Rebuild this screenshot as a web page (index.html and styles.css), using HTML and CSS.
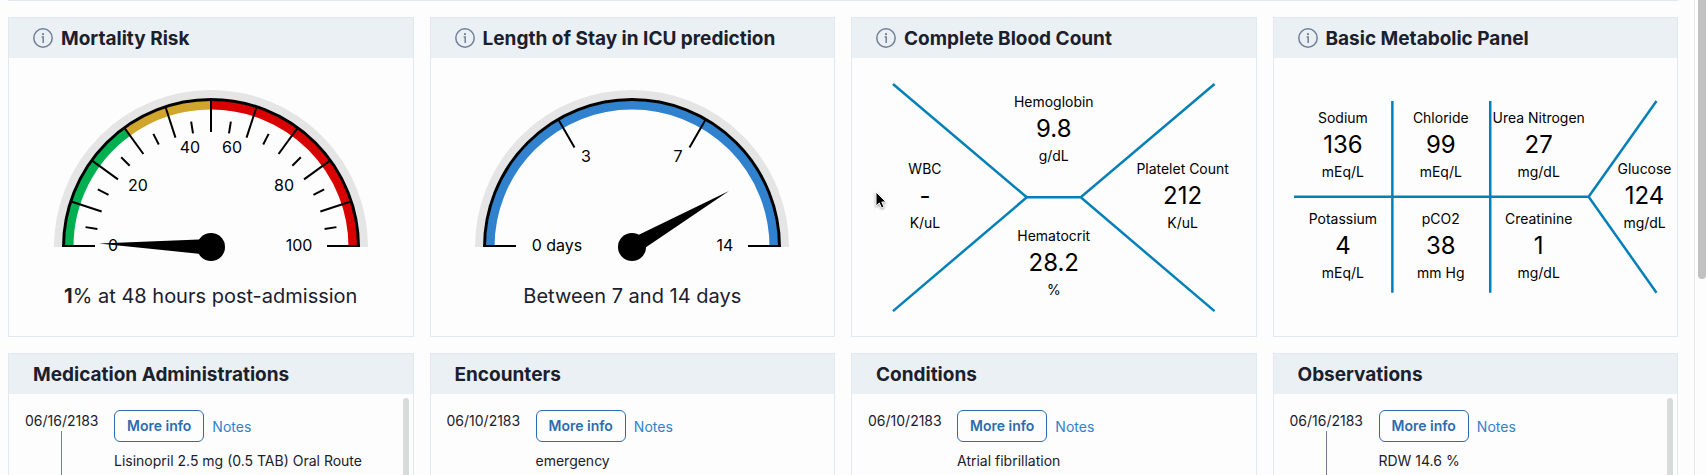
FILE: index.html
```
<!DOCTYPE html>
<html lang="en">
	<head>
		<meta charset="utf-8" />
		<title>Patient Dashboard</title>
		<link rel="stylesheet" href="styles.css">
	</head>
	<body>
		<svg class="defs" aria-hidden="true">
			<symbol id="info" viewBox="0 0 20 20">
				<circle cx="10" cy="10" r="9.2" fill="none" stroke="currentColor" stroke-width="1.5" />
				<circle cx="10" cy="6.2" r="1.1" fill="currentColor" />
				<path d="M8.6 9H10.2V15" fill="none" stroke="currentColor" stroke-width="1.5" />
			</symbol>
		</svg>
		<div class="app">
			<main>
				<div class="cards">
					<section class="card">
						<header>
							<button class="info" aria-label="About Mortality Risk"><svg><use href="#info" /></svg></button>
							<h2>Mortality Risk</h2>
						</header>
						<div class="gauge">
							<svg viewBox="-158 -158 316 174" width="316" height="174">
								<path class="rim" d="M-153 0A153 153 0 0 1 153 0" />
								<path class="band green" d="M-142 0A142 142 0 0 1 -83.5 -114.9" />
								<path class="band yellow" d="M-83.5 -114.9A142 142 0 0 1 0 -142" />
								<path class="band red" d="M0 -142A142 142 0 0 1 142 0" />
								<path class="ring" d="M-147.5 0A147.5 147.5 0 0 1 147.5 0" />
								<g class="ticks">
									<path d="M-149 -1h33" />
									<path d="M-147 0h32" transform="rotate(18)" />
									<path d="M-147 0h32" transform="rotate(36)" />
									<path d="M-147 0h32" transform="rotate(54)" />
									<path d="M-147 0h32" transform="rotate(72)" />
									<path d="M-147 0h32" transform="rotate(90)" />
									<path d="M-147 0h32" transform="rotate(108)" />
									<path d="M-147 0h32" transform="rotate(126)" />
									<path d="M-147 0h32" transform="rotate(144)" />
									<path d="M-147 0h32" transform="rotate(162)" />
									<path d="M149 -1h-33" />
									<path d="M-127 0h12" transform="rotate(9)" />
									<path d="M-127 0h12" transform="rotate(27)" />
									<path d="M-127 0h12" transform="rotate(45)" />
									<path d="M-127 0h12" transform="rotate(63)" />
									<path d="M-127 0h12" transform="rotate(81)" />
									<path d="M-127 0h12" transform="rotate(99)" />
									<path d="M-127 0h12" transform="rotate(117)" />
									<path d="M-127 0h12" transform="rotate(135)" />
									<path d="M-127 0h12" transform="rotate(153)" />
									<path d="M-127 0h12" transform="rotate(171)" />
								</g>
								<g class="scale">
									<text x="-98" y="4">0</text>
									<text x="-73" y="-56">20</text>
									<text x="-21" y="-94">40</text>
									<text x="21" y="-94">60</text>
									<text x="73" y="-56">80</text>
									<text x="88" y="4">100</text>
								</g>
								<path d="M-112 0L0 -8V8Z" transform="rotate(1.8)" />
								<circle r="14" />
							</svg>
							<p><b>1</b>% at 48 hours post-admission</p>
						</div>
					</section>
					<section class="card">
						<header>
							<button class="info" aria-label="About Length of Stay"><svg><use href="#info" /></svg></button>
							<h2>Length of Stay in ICU prediction</h2>
						</header>
						<div class="gauge">
							<svg viewBox="-158 -158 316 174" width="316" height="174">
								<path class="rim" d="M-153 0A153 153 0 0 1 153 0" />
								<path class="band blue" d="M-142 0A142 142 0 0 1 142 0" />
								<path class="ring" d="M-147.5 0A147.5 147.5 0 0 1 147.5 0" />
								<g class="ticks">
									<path d="M-149 -1h33" />
									<path d="M-147 0h32" transform="rotate(60)" />
									<path d="M-147 0h32" transform="rotate(120)" />
									<path d="M149 -1h-33" />
								</g>
								<g class="scale">
									<text x="-75" y="4">0 days</text>
									<text x="-46" y="-85">3</text>
									<text x="46" y="-85">7</text>
									<text x="93" y="4">14</text>
								</g>
								<path d="M-112 0L0 -8V8Z" transform="rotate(150)" />
								<circle r="14" />
							</svg>
							<p>Between 7 and 14 days</p>
						</div>
					</section>
					<section class="card">
						<header>
							<button class="info" aria-label="About Complete Blood Count"><svg><use href="#info" /></svg></button>
							<h2>Complete Blood Count</h2>
						</header>
						<svg class="fishbone" viewBox="0 -1 404 278">
							<path d="M41 25L175 138.5L41 252.5M363 25L229 138.5L363 252.5M175 138.5H229" />
							<g transform="translate(202 48)"><text>Hemoglobin</text><text class="value" y="30">9.8</text><text y="54">g/dL</text></g>
							<g transform="translate(73 115)"><text>WBC</text><text class="value" y="30">-</text><text y="54">K/uL</text></g>
							<g transform="translate(331 115)"><text>Platelet Count</text><text class="value" y="30">212</text><text y="54">K/uL</text></g>
							<g transform="translate(202 182)"><text>Hematocrit</text><text class="value" y="30">28.2</text><text y="54">%</text></g>
						</svg>
					</section>
					<section class="card">
						<header>
							<button class="info" aria-label="About Basic Metabolic Panel"><svg><use href="#info" /></svg></button>
							<h2>Basic Metabolic Panel</h2>
						</header>
						<svg class="fishbone" viewBox="0 -1 404 278">
							<path d="M20 138H315M118.5 42V234M216.5 42V234M383 42L315 138L383 234" />
							<g transform="translate(69 64)"><text>Sodium</text><text class="value" y="30">136</text><text y="54">mEq/L</text></g>
							<g transform="translate(167 64)"><text>Chloride</text><text class="value" y="30">99</text><text y="54">mEq/L</text></g>
							<g transform="translate(265 64)"><text>Urea Nitrogen</text><text class="value" y="30">27</text><text y="54">mg/dL</text></g>
							<g transform="translate(69 165)"><text>Potassium</text><text class="value" y="30">4</text><text y="54">mEq/L</text></g>
							<g transform="translate(167 165)"><text>pCO2</text><text class="value" y="30">38</text><text y="54">mm Hg</text></g>
							<g transform="translate(265 165)"><text>Creatinine</text><text class="value" y="30">1</text><text y="54">mg/dL</text></g>
							<g transform="translate(371 115)"><text>Glucose</text><text class="value" y="30">124</text><text y="54">mg/dL</text></g>
						</svg>
					</section>
					<section class="card list">
						<header><h2>Medication Administrations</h2></header>
						<div class="entries">
							<div class="entry">
								<div class="date linked"><time>06/16/2183</time></div>
								<div class="detail">
									<div class="actions"><button class="more">More info</button><a href="#notes">Notes</a></div>
									<p>Lisinopril 2.5 mg (0.5 TAB) Oral Route</p>
								</div>
							</div>
							<div class="thumb"></div>
						</div>
					</section>
					<section class="card list">
						<header><h2>Encounters</h2></header>
						<div class="entries">
							<div class="entry">
								<div class="date"><time>06/10/2183</time></div>
								<div class="detail">
									<div class="actions"><button class="more">More info</button><a href="#notes">Notes</a></div>
									<p>emergency</p>
								</div>
							</div>
						</div>
					</section>
					<section class="card list">
						<header><h2>Conditions</h2></header>
						<div class="entries">
							<div class="entry">
								<div class="date"><time>06/10/2183</time></div>
								<div class="detail">
									<div class="actions"><button class="more">More info</button><a href="#notes">Notes</a></div>
									<p>Atrial fibrillation</p>
								</div>
							</div>
						</div>
					</section>
					<section class="card list">
						<header><h2>Observations</h2></header>
						<div class="entries">
							<div class="entry">
								<div class="date linked"><time>06/16/2183</time></div>
								<div class="detail">
									<div class="actions"><button class="more">More info</button><a href="#notes">Notes</a></div>
									<p>RDW 14.6 %</p>
								</div>
							</div>
							<div class="thumb"></div>
						</div>
					</section>
				</div>
			</main>
			<div class="scrollbar"><div class="page-thumb"></div></div>
		</div>
		<svg class="cursor" viewBox="0 0 14 20" width="14" height="20" aria-hidden="true">
			<path d="M1 1V15L4.3 12L6.5 17L9 16L6.8 11H11Z" fill="#000" stroke="#fff" />
		</svg>
	</body>
</html>
```
FILE: styles.css
```
* {
	box-sizing: border-box;
}
body {
	margin: 0;
	background: #fdfdfd;
	color: #1a202c;
	font-family: Inter, 'Liberation Sans', sans-serif;
	font-size: 14px;
	line-height: 20px;
}
h2, p {
	margin: 0;
}
button {
	font: inherit;
	cursor: pointer;
}
.defs {
	display: none;
}
.app {
	display: flex;
	height: 100vh;
	overflow: hidden;
}
main {
	flex: 1;
	padding: 0 16px 0 8px;
}
.cards {
	display: grid;
	grid-template-columns: repeat(4, minmax(0, 1fr));
	gap: 16px;
	padding-top: 16px;
	border-top: 1px solid #e2e8f0;
}
.card {
	min-height: 320px;
	border: 1px solid #e2e8f0;
}
.card header {
	display: flex;
	align-items: center;
	gap: 8px;
	height: 40px;
	padding: 0 24px;
	background: #ebf0f5;
}
h2 {
	padding-top: 2px;
	font-size: 19px;
	font-weight: 700;
	line-height: 24px;
	white-space: nowrap;
}
.info {
	display: flex;
	padding: 0;
	border: 0;
	background: none;
	color: #718096;
}
.info svg {
	width: 20px;
	height: 20px;
}

/* gauges */
.gauge {
	display: flex;
	flex-direction: column;
	align-items: center;
	padding-top: 31px;
}
.gauge p {
	margin-top: 19px;
	font-size: 20px;
	line-height: 28px;
}
.rim, .band, .ring {
	fill: none;
}
.rim {
	stroke: #e5e5e5;
	stroke-width: 8;
}
.ring {
	stroke: #000;
	stroke-width: 3;
}
.band {
	stroke-width: 9;
}
.green {
	stroke: #00b050;
}
.yellow {
	stroke: #d0a52c;
}
.red {
	stroke: #d90000;
}
.blue {
	stroke: #3182ce;
}
.ticks {
	stroke: #000;
	stroke-width: 2;
}
.scale {
	font-size: 16px;
	text-anchor: middle;
}

/* lab fishbone diagrams */
.fishbone {
	display: block;
	width: 100%;
	font-size: 14px;
	text-anchor: middle;
}
.fishbone path {
	fill: none;
	stroke: #0480b8;
	stroke-width: 2.5;
}
.value {
	font-size: 24px;
}

/* timelines */
.entries {
	position: relative;
	padding: 16px;
}
.entry {
	display: flex;
	gap: 16px;
}
.date {
	display: flex;
	flex-direction: column;
	width: 73px;
	padding-top: 1px;
}
.linked::after {
	content: '';
	flex: 1;
	width: 1px;
	min-height: 120px;
	margin-left: 36px;
	background: #718096;
}
.actions {
	display: flex;
	align-items: center;
	gap: 8px;
	margin-bottom: 9px;
}
.more {
	height: 32px;
	padding: 0 12px;
	border: 1px solid #2b6cb0;
	border-radius: 6px;
	background: none;
	color: #2b6cb0;
	font-weight: 600;
}
a {
	padding-top: 2px;
	color: #3182ce;
	text-decoration: none;
}
.thumb {
	position: absolute;
	top: 4px;
	right: 4px;
	bottom: 0;
	width: 6px;
	border-radius: 3px;
	background: #d9dada;
}
.scrollbar {
	width: 12px;
	border-left: 1px solid #e8e8e8;
	padding-left: 3px;
}
.page-thumb {
	height: 279px;
	border-radius: 0 0 4px 4px;
	background: #c1c1c1;
}
.cursor {
	position: absolute;
	top: 191px;
	left: 875px;
	filter: drop-shadow(0 1px 1px rgba(0, 0, 0, 0.4));
}
```
